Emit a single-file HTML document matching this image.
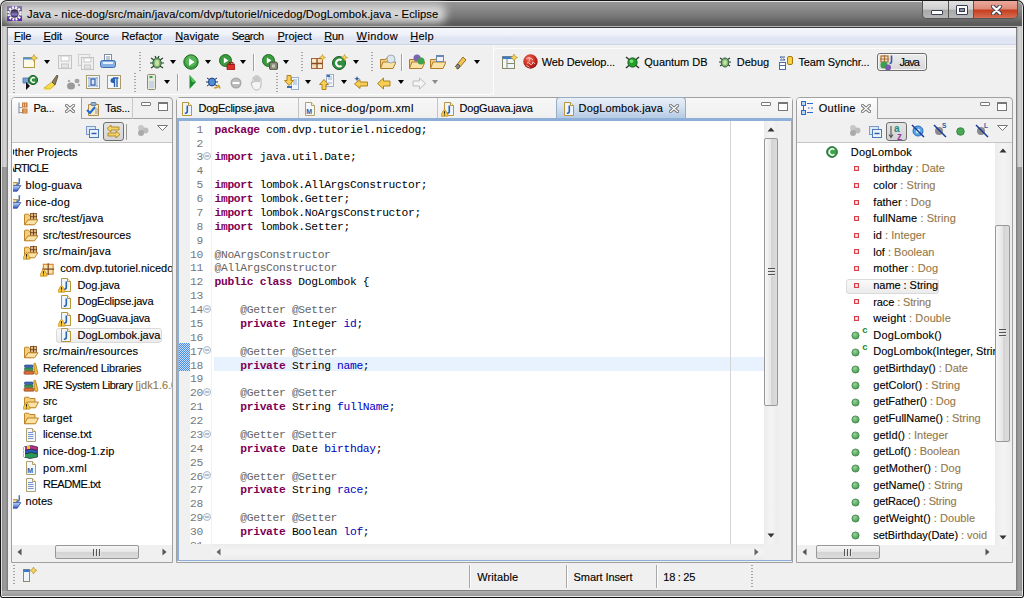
<!DOCTYPE html><html><head><meta charset="utf-8"><style>
*{box-sizing:border-box}
html,body{margin:0;padding:0}
body{width:1024px;height:598px;overflow:hidden;position:relative;background:#f0f0f0;font-family:"Liberation Sans",sans-serif;font-size:11px;color:#000}
.a{position:absolute}
.t{position:absolute;white-space:pre;line-height:13px;font-size:11px;-webkit-text-stroke:0.12px currentColor}
.code{position:absolute;font-family:"Liberation Mono",monospace;font-size:11.3px;letter-spacing:-0.331px;line-height:13.875px;height:13.875px;white-space:pre;color:#000}
.k{color:#7f0055;font-weight:bold}
.f{color:#0000c0}
.an{color:#646464}
.ln{position:absolute;font-family:"Liberation Mono",monospace;font-size:11.3px;letter-spacing:-0.331px;line-height:13.875px;white-space:pre;color:#787878;text-align:right}
.row{position:absolute;white-space:pre;font-size:11px;line-height:16.64px;height:16.64px}
.ty{color:#95784b}
.dd{position:absolute;width:0;height:0;border-left:3.5px solid transparent;border-right:3.5px solid transparent;border-top:4px solid #000}
.grip{position:absolute;width:2px;background:repeating-linear-gradient(#a4a4a4 0 1px,transparent 1px 3px)}
.sep{position:absolute;width:2px;background:#a0a0a0;border-right:1px solid #fff}
</style></head><body>
<div class="a" style="left:0px;top:0px;width:1024px;height:598px;background:#141414;border-radius:7px 7px 3px 3px"></div>
<div class="a" style="left:1px;top:1px;width:1022px;height:596px;background:#e4e4e4;border-radius:6px 6px 2px 2px"></div>
<div class="a" style="left:2px;top:2px;width:1020px;height:594px;background:linear-gradient(90deg,#8c8c8c,#a0a0a0 3px,#8a8a8a 5px,#8a8a8a calc(100% - 5px),#a0a0a0 calc(100% - 3px),#8c8c8c);border-radius:5px 5px 1px 1px"></div>
<div class="a" style="left:2px;top:2px;width:1020px;height:25px;background:linear-gradient(#959595,#888 30%,#747474 60%,#5c5c5c 85%,#575757);border-radius:5px 5px 0 0"></div>
<div class="a" style="left:2px;top:26px;width:1020px;height:1px;background:#b8b8b8"></div>
<div class="a" style="left:2px;top:27px;width:5px;height:140px;background:linear-gradient(90deg,#b8b8b8,#d4d4d4 40%,#cfcfcf 80%,#b0b0b0)"></div>
<div class="a" style="left:1017px;top:27px;width:5px;height:140px;background:linear-gradient(90deg,#b0b0b0,#d4d4d4 40%,#cfcfcf 80%,#b8b8b8)"></div>
<div class="a" style="left:2px;top:591px;width:1020px;height:5px;background:linear-gradient(#b0b0b0,#9a9a9a)"></div>
<div class="a" style="left:2px;top:596px;width:1020px;height:1px;background:#eeeeee"></div>
<div class="a" style="left:4px;top:4px;width:442px;height:19px;border-radius:8px;background:rgba(214,214,214,1);filter:blur(4px)"></div>
<svg class="a" style="left:7px;top:6px" width="15" height="15" viewBox="0 0 15 15">
<defs><linearGradient id="wig" x1="0" y1="0" x2="0" y2="1"><stop offset="0" stop-color="#8a78b0"/><stop offset=".5" stop-color="#6a50a0"/><stop offset="1" stop-color="#5a2aa8"/></linearGradient>
<linearGradient id="wic" x1="0" y1="0" x2="0" y2="1"><stop offset="0" stop-color="#2a2540"/><stop offset=".45" stop-color="#6a5a98"/><stop offset=".6" stop-color="#8a7ac0"/><stop offset="1" stop-color="#3a3068"/></linearGradient></defs>
<rect width="15" height="15" fill="url(#wig)"/>
<circle cx="7.5" cy="7.5" r="6.1" fill="none" stroke="#fafafa" stroke-width="2.4" stroke-dasharray="1.9 1.294"/>
<circle cx="7.5" cy="7.5" r="5" fill="#fafafa"/>
<circle cx="7.5" cy="7.5" r="3.9" fill="url(#wic)" stroke="#222" stroke-width=".6"/>
</svg>
<div class="t" style="left:27px;top:7.62px;font-size:11.2px;letter-spacing:0.107px;">Java - nice-dog/src/main/java/com/dvp/tutoriel/nicedog/DogLombok.java - Eclipse</div>
<div class="a" style="left:922px;top:1px;width:96px;height:18px;border:1px solid #555;border-top:none;border-radius:0 0 5px 5px;overflow:hidden;background:#888">
<div class="a" style="left:0;top:0;width:26px;height:18px;background:linear-gradient(#e2e2e2,#cfcfcf 45%,#a9a9a9 52%,#b9b9b9);border-right:1px solid #555"></div>
<div class="a" style="left:26px;top:0;width:25px;height:18px;background:linear-gradient(#e2e2e2,#cfcfcf 45%,#a9a9a9 52%,#b9b9b9);border-right:1px solid #555"></div>
<div class="a" style="left:51px;top:0;width:44px;height:18px;background:linear-gradient(#eba99b,#dd8c7a 42%,#c63f20 52%,#d9745a)"></div>
<div class="a" style="left:8px;top:9px;width:12px;height:5px;background:#fff;border:1px solid #3b3f52;border-radius:1px"></div>
<div class="a" style="left:33px;top:4px;width:12px;height:10px;background:#fff;border:1px solid #3b3f52;border-radius:1px"><div class="a" style="left:2px;top:2px;width:6px;height:4px;background:#8d91a0;border:1px solid #3b3f52"></div></div>
<svg class="a" style="left:68px;top:4px" width="11" height="10" viewBox="0 0 11 10"><path d="M2 1.5 L9 8.5 M9 1.5 L2 8.5" stroke="#3b3f52" stroke-width="4.2" stroke-linecap="round"/><path d="M2 1.5 L9 8.5 M9 1.5 L2 8.5" stroke="#fff" stroke-width="2.3" stroke-linecap="round"/></svg>
</div>
<div class="a" style="left:7px;top:27px;width:1010px;height:564px;background:#808080"></div>
<div class="a" style="left:7px;top:27px;width:1010px;height:1px;background:#383838"></div>
<div class="a" style="left:8px;top:28px;width:1008px;height:562px;background:#f0f0f0"></div>
<div class="a" style="left:8px;top:28px;width:1008px;height:17px;background:linear-gradient(#f6f8fc,#eef1f8 40%,#dee4f2 60%,#e1e6f3)"></div>
<div class="a" style="left:8px;top:44px;width:1008px;height:1px;background:#cdd2e4"></div>
<div class="a" style="left:8px;top:45px;width:1008px;height:1px;background:#f5f5f6"></div>
<div class="t" style="left:14.1px;top:30.19px;font-size:11px;letter-spacing:-0.183px;"><u>F</u>ile</div>
<div class="t" style="left:43.4px;top:30.19px;font-size:11px;letter-spacing:-0.056px;"><u>E</u>dit</div>
<div class="t" style="left:75px;top:30.19px;font-size:11px;letter-spacing:-0.155px;"><u>S</u>ource</div>
<div class="t" style="left:121.4px;top:30.19px;font-size:11px;letter-spacing:-0.071px;">Refac<u>t</u>or</div>
<div class="t" style="left:175.3px;top:30.19px;font-size:11px;letter-spacing:0.066px;"><u>N</u>avigate</div>
<div class="t" style="left:231.7px;top:30.19px;font-size:11px;letter-spacing:-0.475px;">Se<u>a</u>rch</div>
<div class="t" style="left:277.4px;top:30.19px;font-size:11px;letter-spacing:0.025px;"><u>P</u>roject</div>
<div class="t" style="left:324.3px;top:30.19px;font-size:11px;letter-spacing:-0.352px;"><u>R</u>un</div>
<div class="t" style="left:356.6px;top:30.19px;font-size:11px;letter-spacing:0.412px;"><u>W</u>indow</div>
<div class="t" style="left:410.3px;top:30.19px;font-size:11px;letter-spacing:0.220px;"><u>H</u>elp</div>
<div class="grip" style="left:13px;top:52px;height:20px"></div>
<svg class="a" style="left:22px;top:54px" width="16" height="16" viewBox="0 0 16 16"><rect x="1.5" y="3.5" width="11" height="10" fill="#fdfbe6" stroke="#b59a4b"/><rect x="1.5" y="3.5" width="11" height="2" fill="#4f8fd6"/><path d="M12 0.5 l1.2 2.3 2.3 1.2 -2.3 1.2 -1.2 2.3 -1.2 -2.3 -2.3 -1.2 2.3 -1.2z" fill="#f6d35b" stroke="#b08a20" stroke-width=".6"/></svg>
<div class="dd" style="left:44px;top:60px;border-top-color:#000"></div>
<svg class="a" style="left:57px;top:54px" width="16" height="16" viewBox="0 0 16 16"><rect x="1.5" y="1.5" width="13" height="13" fill="#f0f0f0" stroke="#c3c3c3"/><rect x="4" y="2" width="8" height="5" fill="#fff" stroke="#c8c8c8"/><rect x="4.5" y="10" width="7" height="4" fill="#e4e4e4" stroke="#c8c8c8"/></svg>
<svg class="a" style="left:78px;top:54px" width="16" height="16" viewBox="0 0 16 16"><rect x="0.5" y="0.5" width="11" height="11" fill="#f0f0f0" stroke="#cfcfcf"/><rect x="3.5" y="3.5" width="12" height="12" fill="#f0f0f0" stroke="#c3c3c3"/><rect x="6" y="4" width="7" height="4" fill="#fff" stroke="#c8c8c8"/><rect x="6.5" y="11" width="6" height="4" fill="#e4e4e4" stroke="#c8c8c8"/></svg>
<svg class="a" style="left:100px;top:54px" width="16" height="16" viewBox="0 0 16 16"><rect x="4.5" y="0.5" width="7" height="7" fill="#fff" stroke="#7f8da8"/><path d="M6 3h4M6 5h4" stroke="#7f8da8"/><rect x="0.5" y="6.5" width="15" height="7" rx="2" fill="#86aee0" stroke="#3d6eb5"/><rect x="3" y="8" width="10" height="2" fill="#e6f0fb"/></svg>
<div class="grip" style="left:139px;top:52px;height:20px"></div>
<svg class="a" style="left:149px;top:54px" width="16" height="16" viewBox="0 0 16 16"><g stroke="#1e3d2d" stroke-width="1.2"><path d="M2 4l3 2M14 4l-3 2M1 9h3M15 9h-3M2 14l3-2M14 14l-3-2M6 2l1 2M10 2l-1 2"/></g><ellipse cx="8" cy="9" rx="4.2" ry="5" fill="#7fb46e" stroke="#2b5a3a"/><ellipse cx="8" cy="9" rx="2" ry="3" fill="#c6e3a6"/></svg>
<div class="dd" style="left:170px;top:60px;border-top-color:#000"></div>
<svg class="a" style="left:183px;top:54px" width="16" height="16" viewBox="0 0 16 16"><circle cx="8" cy="8" r="7.2" fill="#3a9a3e" stroke="#1f6e24"/><circle cx="8" cy="7" r="5.5" fill="#58b55a"/><path d="M6 4.2 L11.5 8 L6 11.8z" fill="#fff"/></svg>
<div class="dd" style="left:205px;top:60px;border-top-color:#000"></div>
<svg class="a" style="left:219px;top:54px" width="16" height="16" viewBox="0 0 16 16"><circle cx="6.5" cy="6.5" r="6" fill="#3a9a3e" stroke="#1f6e24"/><path d="M4.8 3.5 L9.5 6.5 L4.8 9.5z" fill="#fff"/><rect x="8" y="10" width="8" height="6" rx="1" fill="#d8302c" stroke="#8f1510" stroke-width=".8"/><rect x="10" y="8.5" width="4" height="2" fill="none" stroke="#8f1510" stroke-width=".8"/></svg>
<div class="dd" style="left:240px;top:60px;border-top-color:#000"></div>
<div class="sep" style="left:253px;top:54px;height:17px"></div>
<svg class="a" style="left:262px;top:54px" width="16" height="16" viewBox="0 0 16 16"><circle cx="6.5" cy="6.5" r="6" fill="#3a9a3e" stroke="#1f6e24"/><path d="M4.8 3.5 L9.5 6.5 L4.8 9.5z" fill="#fff"/><rect x="7.5" y="8" width="8" height="8" rx="2" fill="#8a8a7a" stroke="#4d4d3d"/><rect x="10" y="10.5" width="3" height="3" fill="#c8c8b8"/></svg>
<div class="dd" style="left:283px;top:60px;border-top-color:#000"></div>
<div class="grip" style="left:301px;top:52px;height:20px"></div>
<svg class="a" style="left:310px;top:54px" width="16" height="16" viewBox="0 0 16 16"><rect x="1.5" y="4.5" width="11" height="10" fill="#f4dcb0" stroke="#a8643a"/><rect x="2.5" y="5.5" width="4" height="4" fill="#fbeed0"/><rect x="7.5" y="10" width="4" height="4" fill="#fbeed0"/><path d="M1.5 9.5h11M7 4.5v10" stroke="#8a4a22" stroke-width="1.3"/><path d="M12.5 0.5 l1 2 2 1 -2 1 -1 2 -1 -2 -2 -1 2 -1z" fill="#f6d35b" stroke="#b08a20" stroke-width=".6"/></svg>
<svg class="a" style="left:332px;top:54px" width="16" height="16" viewBox="0 0 16 16"><circle cx="7" cy="9" r="6.5" fill="#2f8f3e" stroke="#1b5e26"/><path d="M9.6 6.3 A3.4 3.4 0 1 0 9.6 11.7" fill="none" stroke="#fff" stroke-width="2"/><path d="M12.5 0.5 l1 2 2 1 -2 1 -1 2 -1 -2 -2 -1 2 -1z" fill="#f6d35b" stroke="#b08a20" stroke-width=".6"/></svg>
<div class="dd" style="left:353px;top:60px;border-top-color:#000"></div>
<div class="grip" style="left:371px;top:52px;height:20px"></div>
<svg class="a" style="left:380px;top:54px" width="16" height="16" viewBox="0 0 16 16"><path d="M0.5 5.5h5l1-1.5h6v9.5h-12z" fill="#f3cf86" stroke="#b07b2a"/><path d="M0.5 14.5 l2.5-6.5h13l-3 6.5z" fill="#fbe2a6" stroke="#b07b2a"/><circle cx="11" cy="5" r="4" fill="#dce6ef" stroke="#8a9aaa" stroke-width=".8"/></svg>
<div class="sep" style="left:401px;top:54px;height:17px"></div>
<svg class="a" style="left:409px;top:54px" width="16" height="16" viewBox="0 0 16 16"><path d="M0.5 5.5h5l1-1.5h6v9.5h-12z" fill="#f3cf86" stroke="#b07b2a"/><path d="M0.5 14.5 l2.5-6.5h13l-3 6.5z" fill="#fbe2a6" stroke="#b07b2a"/><circle cx="8" cy="4" r="3.5" fill="#7b62b5"/><circle cx="12" cy="7" r="3.5" fill="#3ea24a"/></svg>
<svg class="a" style="left:430px;top:54px" width="16" height="16" viewBox="0 0 16 16"><path d="M0.5 5.5h5l1-1.5h6v9.5h-12z" fill="#f3cf86" stroke="#b07b2a"/><path d="M0.5 14.5 l2.5-6.5h13l-3 6.5z" fill="#fbe2a6" stroke="#b07b2a"/><rect x="6.5" y="1.5" width="7" height="6" fill="#eef3fa" stroke="#6c87b0"/><rect x="6.5" y="1.5" width="7" height="1.5" fill="#6c87b0"/></svg>
<svg class="a" style="left:452px;top:54px" width="16" height="16" viewBox="0 0 16 16"><path d="M3 13 L11 3 L14 6 L6 15z" fill="#f2c25a" stroke="#9c6e1c"/><path d="M3 13 L6 10 L8 12 L6 15z" fill="#8a8a8a" stroke="#555"/><path d="M1 15.5 l3-2" stroke="#fff6b0" stroke-width="2"/></svg>
<div class="dd" style="left:474px;top:60px;border-top-color:#000"></div>
<div class="grip" style="left:13px;top:74px;height:19px"></div>
<svg class="a" style="left:22px;top:74px" width="16" height="16" viewBox="0 0 16 16"><path d="M1 4h9v5H1z" fill="#7aa0d8" stroke="#3d6eb5" stroke-width=".8"/><path d="M4 8v8l4-4z" fill="#111"/><circle cx="11" cy="6" r="4.6" fill="#2f8f3e" stroke="#1b5e26"/><path d="M12.8 4.3A2.3 2.3 0 1 0 12.8 7.7" fill="none" stroke="#fff" stroke-width="1.4"/></svg>
<svg class="a" style="left:43px;top:74px" width="16" height="16" viewBox="0 0 16 16"><path d="M1 14 L9 8 L12 11 L7 15z" fill="#f6dc4a" stroke="#c8a21c" stroke-width=".8"/><path d="M9 8 L14 1 L15 2 L12 11z" fill="#8a7a60" stroke="#5a4a30" stroke-width=".8"/><path d="M0 15.5h8" stroke="#f6e46a" stroke-width="1.5"/></svg>
<svg class="a" style="left:65px;top:75px" width="16" height="16" viewBox="0 0 16 16"><ellipse cx="6" cy="11" rx="4" ry="3.5" fill="#9a9a9a"/><ellipse cx="12" cy="6" rx="2.5" ry="2.2" fill="#a5a5a5"/><circle cx="4" cy="6" r="1.2" fill="#aaa"/><circle cx="14" cy="10" r="1.2" fill="#aaa"/></svg>
<svg class="a" style="left:86px;top:75px" width="16" height="16" viewBox="0 0 16 16"><rect x="0.5" y="0.5" width="13" height="13" fill="#f4f8fc" stroke="#a89a6a"/><path d="M2.5 3h9M2.5 11h9M3 2.5v9M11 2.5v9" stroke="#3a6ab8" stroke-dasharray="1 1"/><rect x="5" y="4" width="4" height="6" fill="#dde8f6" stroke="#2a5aa8" stroke-width="1.2"/></svg>
<svg class="a" style="left:107px;top:75px" width="16" height="16" viewBox="0 0 16 16"><rect x="0.5" y="0.5" width="13" height="13" fill="#f4f8fc" stroke="#a89a6a"/><path d="M7.5 3v9M10 3v9M6 3h5.5" stroke="#2a62b0" stroke-width="1.4" fill="none"/><path d="M7.5 3h-1.5a2.5 2.5 0 0 0 0 5h1.5z" fill="#2a62b0"/></svg>
<div class="grip" style="left:134px;top:73px;height:20px"></div>
<svg class="a" style="left:147px;top:74px" width="16" height="16" viewBox="0 0 16 16"><rect x="0.5" y="0.5" width="8" height="15" rx="1" fill="#e6eadc" stroke="#8b8a6a"/><rect x="2.5" y="2" width="3" height="2" fill="#3aa04a"/><rect x="2" y="7" width="5" height="7" fill="#c8d4e4"/></svg>
<div class="dd" style="left:164px;top:79.5px;border-top-color:#000"></div>
<div class="sep" style="left:177px;top:74px;height:17px"></div>
<svg class="a" style="left:188px;top:74px" width="16" height="16" viewBox="0 0 16 16"><path d="M1.5 1 L8 8 L1.5 15z" fill="#1e8a2e"/><path d="M1.5 1 L8 8 L4 8z" fill="#56c45a"/></svg>
<svg class="a" style="left:206px;top:75px" width="16" height="16" viewBox="0 0 16 16"><g stroke="#1e2d5d" stroke-width="1"><path d="M1 3l3 2M11 3l-3 2M0 7h3M12 7h-3M1 11l3-2M11 11l-3-2"/></g><ellipse cx="6" cy="7" rx="3.5" ry="4" fill="#4e90d8" stroke="#1e3d7d"/><path d="M8 13 q3 0 5-2 l-1.5-1 M13 11 l1 2.5" stroke="#c89a20" stroke-width="1.6" fill="none"/></svg>
<svg class="a" style="left:230px;top:77px" width="16" height="16" viewBox="0 0 16 16"><circle cx="6" cy="6" r="5.5" fill="#a8a8a8"/><circle cx="6" cy="6" r="4" fill="#bdbdbd"/><rect x="2.5" y="5" width="7" height="2" fill="#fff"/></svg>
<svg class="a" style="left:250px;top:75px" width="16" height="16" viewBox="0 0 16 16"><path d="M3 8V3a1 1 0 0 1 2 0v4V1.5a1 1 0 0 1 2 0V7V2a1 1 0 0 1 2 0v5V4a1 1 0 0 1 2 0v6c0 3-2 5-4 5H6c-2 0-3-2-4-4L1 8a1 1 0 0 1 2 0z" fill="#f4f4f4" stroke="#b8b8b8"/></svg>
<div class="grip" style="left:276px;top:73px;height:20px"></div>
<svg class="a" style="left:284px;top:75px" width="16" height="16" viewBox="0 0 16 16"><rect x="7.5" y="2.5" width="7" height="12" fill="#f2f6fc" stroke="#9ab0d0"/><path d="M9 5h4M9 7h4M9 9h4" stroke="#9ab0d0"/><rect x="3" y="11" width="5" height="2" fill="#3a6eb8"/><path d="M3 0.5h4v5h2.5l-4.5 5-4.5-5H3z" fill="#f6cd55" stroke="#b0821c"/></svg>
<div class="dd" style="left:305px;top:79.5px;border-top-color:#000"></div>
<svg class="a" style="left:319px;top:74px" width="16" height="16" viewBox="0 0 16 16"><rect x="7.5" y="0.5" width="7" height="12" fill="#f2f6fc" stroke="#9ab0d0"/><path d="M9 3h4M9 5h4M9 9h4" stroke="#9ab0d0"/><rect x="8" y="1" width="3" height="2" fill="#3a6eb8"/><path d="M3 15.5h4v-5h2.5l-4.5-5-4.5 5H3z" fill="#f6cd55" stroke="#b0821c"/></svg>
<div class="dd" style="left:341px;top:79.5px;border-top-color:#000"></div>
<svg class="a" style="left:354px;top:76px" width="16" height="16" viewBox="0 0 16 16"><path d="M0.5 8 L6 3.5v2.5h7.5v4H6v2.5z" fill="#f6cd55" stroke="#b0821c"/><path d="M3 0l.8 2 2 .8-2 .8-.8 2-.8-2-2-.8 2-.8z" fill="#2a5aa8"/></svg>
<svg class="a" style="left:377px;top:76px" width="16" height="16" viewBox="0 0 16 16"><path d="M0.5 7.5 L6.5 2v3h6.5v5H6.5v3z" fill="#f6cd55" stroke="#b0821c"/></svg>
<div class="dd" style="left:398px;top:79.5px;border-top-color:#000"></div>
<svg class="a" style="left:412px;top:76px" width="16" height="16" viewBox="0 0 16 16"><path d="M13.5 7.5 L7.5 2v3H1v5h6.5v3z" fill="#f4f4f4" stroke="#bcbcbc"/></svg>
<div class="dd" style="left:432px;top:79.5px;border-top-color:#8a8a8a"></div>
<div class="a" style="left:8px;top:46px;width:486px;height:49px;border-right:1px solid #fcfcfc;border-bottom:1px solid #fcfcfc;border-bottom-right-radius:4px"></div>
<div class="a" style="left:493px;top:48px;width:523px;height:47px;border-top:1px solid #fcfcfc;border-left:1px solid #fcfcfc;border-top-left-radius:4px"></div>
<svg class="a" style="left:502px;top:54px" width="16" height="16" viewBox="0 0 16 16"><rect x="0.5" y="2.5" width="12" height="12" fill="#eef6fc" stroke="#8a8a6a"/><rect x="0.5" y="2.5" width="12" height="2.5" fill="#3a7ac8"/><path d="M5 5v9.5M5 9.5h7.5" stroke="#8a8a6a"/><path d="M12 0 l1.2 2.3 2.3 1.2 -2.3 1.2 -1.2 2.3 -1.2 -2.3 -2.3 -1.2 2.3 -1.2z" fill="#f6d35b" stroke="#b08a20" stroke-width=".6"/></svg>
<svg class="a" style="left:523px;top:54px" width="16" height="16" viewBox="0 0 16 16"><defs><radialGradient id="wbg" cx=".4" cy=".35" r=".7"><stop offset="0" stop-color="#f07060"/><stop offset=".6" stop-color="#c82a20"/><stop offset="1" stop-color="#8a1010"/></radialGradient></defs><circle cx="7.5" cy="7.5" r="7.2" fill="url(#wbg)"/><path d="M3 5q2-2 4-1t3 2M4 9q2-1 3 1t3-1M6 3.5q1 2 0 4M9 8q2 0 3 2M3.5 11.5q2 .5 3 2" stroke="#fde0d8" stroke-width=".9" fill="none" opacity=".9"/></svg>
<div class="t" style="left:541.7px;top:55.99px;font-size:11px;letter-spacing:-0.117px;">Web Develop...</div>
<svg class="a" style="left:625px;top:55px" width="16" height="16" viewBox="0 0 16 16"><path d="M1 2l13 11M14 2L1 13" stroke="#3a3a3a" stroke-width="1.6"/><circle cx="7.5" cy="7.5" r="4.6" fill="#22a02a" stroke="#0e5a14"/><circle cx="6.5" cy="6.3" r="1.8" fill="#7ee07a"/></svg>
<div class="t" style="left:644.3px;top:55.99px;font-size:11px;letter-spacing:-0.044px;">Quantum DB</div>
<svg class="a" style="left:719px;top:55px" width="16" height="16" viewBox="0 0 16 16"><g stroke="#1e3d2d" stroke-width="1.1"><path d="M1 3l3 2M11 3l-3 2M0 7h3M12 7h-3M1 11l3-2M11 11l-3-2"/></g><ellipse cx="6" cy="7.5" rx="3.8" ry="4.5" fill="#7fb46e" stroke="#2b5a3a"/><ellipse cx="6" cy="7.5" rx="1.8" ry="2.6" fill="#c6e3a6"/></svg>
<div class="t" style="left:736.8px;top:55.99px;font-size:11px;letter-spacing:-0.005px;">Debug</div>
<svg class="a" style="left:779px;top:55px" width="16" height="16" viewBox="0 0 16 16"><rect x="0.5" y="7.5" width="6" height="7" fill="#fff" stroke="#4a6aa8"/><path d="M1 10.5h5" stroke="#4a6aa8"/><path d="M1 5h5l-1.5-1.5M6 2H1l1.5 1.5" stroke="#3a5a98" fill="none"/><rect x="8.5" y="1.5" width="5" height="8" rx="1.5" fill="#f8d048" stroke="#a87a10"/></svg>
<div class="t" style="left:798.5px;top:55.99px;font-size:11px;letter-spacing:-0.128px;">Team Synchr...</div>
<div class="a" style="left:877px;top:53px;width:50px;height:18px;border:1px solid #6e6e6e;border-radius:3px;background:linear-gradient(#ececec,#d8d8d8);box-shadow:inset 0 0 0 1px #f6f6f6"></div>
<svg class="a" style="left:880px;top:55px" width="16" height="16" viewBox="0 0 16 16"><rect x="1" y="1" width="7" height="6" fill="none" stroke="#b0702c" stroke-width="1.2"/><path d="M4.5 0v8M0 4h9" stroke="#b0702c" stroke-width="1.2"/><path d="M11.5 0.5v6q0 2-2 2" stroke="#2a5aa8" stroke-width="1.6" fill="none"/><circle cx="4" cy="10" r="3.6" fill="#3aa04a"/><circle cx="8" cy="12.5" r="3" fill="#7b5ab5"/></svg>
<div class="t" style="left:899.6px;top:55.99px;font-size:11px;letter-spacing:-1.017px;">Java</div>
<div class="a" style="left:11px;top:97px;width:162px;height:466px;border:1px solid #a0a0a0;border-radius:4px 4px 0 0;background:#f0f0f0"></div>
<div class="a" style="left:82px;top:118px;width:90px;height:1px;background:#a0a0a0"></div>
<div class="a" style="left:12px;top:98px;width:70px;height:21px;background:linear-gradient(#fefefe,#f4f4f4 60%,#f0f0f0);border-radius:3px 3px 0 0"></div>
<div class="a" style="left:81px;top:98px;width:1px;height:21px;background:#a0a0a0"></div>
<div class="a" style="left:132px;top:98px;width:1px;height:21px;background:#c8c8c8"></div>
<svg class="a" style="left:18px;top:102px" width="10" height="12" viewBox="0 0 10 12"><path d="M1 0.5v11M1 5.5h3M1 10.5h3" stroke="#8a9ab0" stroke-width="1.2"/><rect x="4" y="0.5" width="5.5" height="5" fill="#c87b3a"/><rect x="4" y="6.5" width="5.5" height="5" fill="#c87b3a"/><path d="M5.5 1.5v3M7.5 1.5v3M5.5 8h3M5.5 10h3" stroke="#f6d29a" stroke-width=".8"/></svg>
<div class="t" style="left:33.4px;top:102.29px;font-size:11px;letter-spacing:-0.381px;">Pa...</div>
<svg class="a" style="left:65px;top:104px" width="10" height="9" viewBox="0 0 10 9"><path d="M1.5 1.5L8.5 7.5M8.5 1.5L1.5 7.5" stroke="#6a6a6a" stroke-width="3" stroke-linecap="square"/><path d="M1.5 1.5L8.5 7.5M8.5 1.5L1.5 7.5" stroke="#fff" stroke-width="1.3" stroke-linecap="square"/></svg>
<svg class="a" style="left:86px;top:101px" width="15" height="15" viewBox="0 0 15 15"><path d="M2.5 3.5h10v11h-10z" fill="#f5e9c6" stroke="#b08a48"/><rect x="5" y="1.5" width="5" height="3" rx="1" fill="#9ab0d0" stroke="#4a6a98" stroke-width=".8"/><path d="M1 9l3 3 5-6" stroke="#1e6ad8" stroke-width="2" fill="none"/><path d="M9 8h3M9 10h3M9 12h3" stroke="#7a8aa8" stroke-width=".8"/></svg>
<div class="t" style="left:105px;top:102.29px;font-size:11px;letter-spacing:-0.239px;">Tas...</div>
<div class="a" style="left:141px;top:102px;width:10px;height:4px;border:1px solid #777;background:#fff;border-radius:1px"></div>
<div class="a" style="left:158px;top:102px;width:10px;height:9px;border:1px solid #777;border-top-width:2px;background:#fff"></div>
<div class="a" style="left:12px;top:142px;width:160px;height:1px;background:#c4c4c4"></div>
<svg class="a" style="left:86px;top:126px" width="13" height="12" viewBox="0 0 13 12"><rect x="0.5" y="0.5" width="9" height="8" fill="#dde8f6" stroke="#7a9ac8"/><rect x="3.5" y="3.5" width="9" height="8" fill="#eaf2fb" stroke="#4a7ab8"/><path d="M5.5 7.5h5" stroke="#2a5aa8" stroke-width="1.4"/></svg>
<div class="a" style="left:103px;top:122px;width:21px;height:19px;border:1px solid #6f6f6f;border-radius:3px;background:linear-gradient(#e4e4e4,#d4d4d4)"></div>
<svg class="a" style="left:106px;top:124px" width="15" height="14" viewBox="0 0 15 14"><path d="M1 4.5l4-3.5v2h8v3H5v2z" fill="#f3d36a" stroke="#b08420" stroke-width=".9"/><path d="M14 10.5l-4-3.5v2H2v3h8v2z" fill="#f3d36a" stroke="#b08420" stroke-width=".9"/></svg>
<div class="a" style="left:126px;top:124px;width:1px;height:16px;background:#9a9a9a"></div>
<svg class="a" style="left:136px;top:124px" width="13" height="13" viewBox="0 0 13 13"><circle cx="5" cy="4" r="3" fill="#c8c8c8"/><circle cx="9.5" cy="6.5" r="3" fill="#bdbdbd"/><circle cx="5" cy="9" r="3" fill="#aaaaaa"/></svg>
<svg class="a" style="left:157px;top:125px" width="11" height="6" viewBox="0 0 11 6"><path d="M0.5 0.5h10l-5 5z" fill="#fff" stroke="#777"/></svg>
<div class="a" style="left:12px;top:143px;width:160px;height:402px;background:#fff"></div>
<div class="a" style="left:12px;top:545px;width:160px;height:16px;background:#f0f0f0"></div>
<svg class="a" style="left:17px;top:548px" width="5" height="8" viewBox="0 0 5 8"><path d="M4.5 0.5v7l-4-3.5z" fill="#555"/></svg>
<svg class="a" style="left:162px;top:548px" width="5" height="8" viewBox="0 0 5 8"><path d="M0.5 0.5v7l4-3.5z" fill="#555"/></svg>
<div class="a" style="left:55px;top:545px;width:84px;height:14px;border:1px solid #979797;border-radius:2px;background:linear-gradient(#f6f6f6,#e6e6e6 50%,#d3d3d3 51%,#dcdcdc)"></div>
<div class="a" style="left:93px;top:549px;width:8px;height:7px;background:repeating-linear-gradient(90deg,#555 0 1px,#e8e8e8 1px 2px,transparent 2px 3px)"></div>
<div class="a" style="left:13px;top:143px;width:159px;height:402px;overflow:hidden">
<div class="a" style="left:43px;top:184.50px;width:106px;height:15px;border:1px solid #dadada;border-radius:3px;background:linear-gradient(#fafafa,#ebebeb)"></div>
<div class="t" style="left:-7px;top:2.59px;font-size:11px;letter-spacing:0.091px;">Other Projects</div>
<div class="t" style="left:-5.5px;top:19.23px;font-size:11px;letter-spacing:-0.811px;">ARTICLE</div>
<svg class="a" style="left:-7.399999999999999px;top:34.379999999999995px" width="16" height="16" viewBox="0 0 16 16"><defs><linearGradient id="pjg" x1="0" y1="0" x2="0" y2="1"><stop offset="0" stop-color="#c4e2fc"/><stop offset="1" stop-color="#3252c0"/></linearGradient></defs><path d="M2 4.5h4l1 1h5v4H2z" fill="#f3d683" stroke="#b08a30" stroke-width=".8"/><path d="M13.3 1.3v4q0 2-2 2h-1" stroke="#4a72b8" stroke-width="1.5" fill="none"/><path d="M4 8.6h10.8l-3.6 5.6H1.6z" fill="url(#pjg)" stroke="#2a48a8" stroke-width=".8"/></svg>
<div class="t" style="left:12.600000000000001px;top:35.87px;font-size:11px;letter-spacing:0.218px;">blog-guava</div>
<svg class="a" style="left:-7.399999999999999px;top:51.01999999999998px" width="16" height="16" viewBox="0 0 16 16"><defs><linearGradient id="pjg" x1="0" y1="0" x2="0" y2="1"><stop offset="0" stop-color="#c4e2fc"/><stop offset="1" stop-color="#3252c0"/></linearGradient></defs><path d="M2 4.5h4l1 1h5v4H2z" fill="#f3d683" stroke="#b08a30" stroke-width=".8"/><path d="M13.3 1.3v4q0 2-2 2h-1" stroke="#4a72b8" stroke-width="1.5" fill="none"/><path d="M4 8.6h10.8l-3.6 5.6H1.6z" fill="url(#pjg)" stroke="#2a48a8" stroke-width=".8"/></svg>
<div class="t" style="left:12.600000000000001px;top:52.51px;font-size:11px;letter-spacing:0.300px;">nice-dog</div>
<svg class="a" style="left:9.900000000000006px;top:67.66px" width="16" height="16" viewBox="0 0 16 16"><path d="M1.5 13.5V4q0-.8.8-.8h3.2l1 1.3h1.5v9z" fill="#f3cf7a" stroke="#b87818" stroke-width=".9"/><rect x="7.5" y="2.5" width="6" height="6.5" fill="#e0b888" stroke="#8a5a2a" stroke-width=".9"/><path d="M10.5 1.8v7.5M7 5.7h7" stroke="#6a3a1a" stroke-width=".9"/><path d="M1.5 13.8l3.5-5h10l-3.5 5z" fill="#fbe3a5" stroke="#b87818" stroke-width=".9"/></svg>
<div class="t" style="left:29.900000000000006px;top:69.15px;font-size:11px;letter-spacing:0.151px;">src/test/java</div>
<svg class="a" style="left:9.900000000000006px;top:84.30000000000001px" width="16" height="16" viewBox="0 0 16 16"><path d="M1.5 13.5V4q0-.8.8-.8h3.2l1 1.3h1.5v9z" fill="#f3cf7a" stroke="#b87818" stroke-width=".9"/><rect x="7.5" y="2.5" width="6" height="6.5" fill="#e0b888" stroke="#8a5a2a" stroke-width=".9"/><path d="M10.5 1.8v7.5M7 5.7h7" stroke="#6a3a1a" stroke-width=".9"/><path d="M1.5 13.8l3.5-5h10l-3.5 5z" fill="#fbe3a5" stroke="#b87818" stroke-width=".9"/></svg>
<div class="t" style="left:29.900000000000006px;top:85.79px;font-size:11px;letter-spacing:0.070px;">src/test/resources</div>
<svg class="a" style="left:9.900000000000006px;top:100.94px" width="16" height="16" viewBox="0 0 16 16"><path d="M1.5 13.5V4q0-.8.8-.8h3.2l1 1.3h1.5v9z" fill="#f3cf7a" stroke="#b87818" stroke-width=".9"/><rect x="7.5" y="2.5" width="6" height="6.5" fill="#e0b888" stroke="#8a5a2a" stroke-width=".9"/><path d="M10.5 1.8v7.5M7 5.7h7" stroke="#6a3a1a" stroke-width=".9"/><path d="M1.5 13.8l3.5-5h10l-3.5 5z" fill="#fbe3a5" stroke="#b87818" stroke-width=".9"/><path d="M3.5 8.3q.5 0 .9.7l2.7 5.2q.4 1-.6 1H.5q-1 0-.6-1L2.6 9q.4-.7.9-.7z" fill="#f6c842" stroke="#c08a18" stroke-width=".7"/><path d="M3.5 10.2v2.5M3.5 13.6v.9" stroke="#222" stroke-width="1"/></svg>
<div class="t" style="left:29.900000000000006px;top:102.43px;font-size:11px;letter-spacing:0.259px;">src/main/java</div>
<svg class="a" style="left:27.200000000000003px;top:117.57999999999998px" width="16" height="16" viewBox="0 0 16 16"><rect x="3.3" y="3.3" width="9.8" height="9.8" fill="#f8e4a8" stroke="#d8802a" stroke-width="1.1"/><path d="M8.2 2.3v11.8M2.3 8.2h11.8" stroke="#7a4a2a" stroke-width="1.2"/><path d="M3.5 8.3q.5 0 .9.7l2.7 5.2q.4 1-.6 1H.5q-1 0-.6-1L2.6 9q.4-.7.9-.7z" fill="#f6c842" stroke="#c08a18" stroke-width=".7"/><path d="M3.5 10.2v2.5M3.5 13.6v.9" stroke="#222" stroke-width="1"/></svg>
<div class="t" style="left:47.2px;top:119.07px;font-size:11px;">com.dvp.tutoriel.nicedog</div>
<svg class="a" style="left:44.5px;top:134.21999999999997px" width="16" height="16" viewBox="0 0 16 16"><path d="M3.5 1.5h6l3 3v10h-9z" fill="#eef5fc" stroke="#b8963a"/><path d="M9.5 1.5v3h3" fill="#faf2dc" stroke="#b8963a"/><path d="M8.3 4.5v5.8q0 1.9-1.9 1.9h-.6" stroke="#2a62b0" stroke-width="1.6" fill="none"/><path d="M3.5 8.3q.5 0 .9.7l2.7 5.2q.4 1-.6 1H.5q-1 0-.6-1L2.6 9q.4-.7.9-.7z" fill="#f6c842" stroke="#c08a18" stroke-width=".7"/><path d="M3.5 10.2v2.5M3.5 13.6v.9" stroke="#222" stroke-width="1"/></svg>
<div class="t" style="left:64.5px;top:135.71px;font-size:11px;letter-spacing:-0.132px;">Dog.java</div>
<svg class="a" style="left:44.5px;top:150.85999999999996px" width="16" height="16" viewBox="0 0 16 16"><path d="M3.5 1.5h6l3 3v10h-9z" fill="#eef5fc" stroke="#b8963a"/><path d="M9.5 1.5v3h3" fill="#faf2dc" stroke="#b8963a"/><path d="M8.3 4.5v5.8q0 1.9-1.9 1.9h-.6" stroke="#2a62b0" stroke-width="1.6" fill="none"/></svg>
<div class="t" style="left:64.5px;top:152.35px;font-size:11px;letter-spacing:-0.205px;">DogEclipse.java</div>
<svg class="a" style="left:44.5px;top:167.5px" width="16" height="16" viewBox="0 0 16 16"><path d="M3.5 1.5h6l3 3v10h-9z" fill="#eef5fc" stroke="#b8963a"/><path d="M9.5 1.5v3h3" fill="#faf2dc" stroke="#b8963a"/><path d="M8.3 4.5v5.8q0 1.9-1.9 1.9h-.6" stroke="#2a62b0" stroke-width="1.6" fill="none"/><path d="M3.5 8.3q.5 0 .9.7l2.7 5.2q.4 1-.6 1H.5q-1 0-.6-1L2.6 9q.4-.7.9-.7z" fill="#f6c842" stroke="#c08a18" stroke-width=".7"/><path d="M3.5 10.2v2.5M3.5 13.6v.9" stroke="#222" stroke-width="1"/></svg>
<div class="t" style="left:64.5px;top:168.99px;font-size:11px;letter-spacing:-0.269px;">DogGuava.java</div>
<svg class="a" style="left:44.5px;top:184.14000000000004px" width="16" height="16" viewBox="0 0 16 16"><path d="M3.5 1.5h6l3 3v10h-9z" fill="#eef5fc" stroke="#b8963a"/><path d="M9.5 1.5v3h3" fill="#faf2dc" stroke="#b8963a"/><path d="M8.3 4.5v5.8q0 1.9-1.9 1.9h-.6" stroke="#2a62b0" stroke-width="1.6" fill="none"/></svg>
<div class="t" style="left:64.5px;top:185.63px;font-size:11px;letter-spacing:0.026px;">DogLombok.java</div>
<svg class="a" style="left:9.900000000000006px;top:200.78000000000003px" width="16" height="16" viewBox="0 0 16 16"><path d="M1.5 13.5V4q0-.8.8-.8h3.2l1 1.3h1.5v9z" fill="#f3cf7a" stroke="#b87818" stroke-width=".9"/><rect x="7.5" y="2.5" width="6" height="6.5" fill="#e0b888" stroke="#8a5a2a" stroke-width=".9"/><path d="M10.5 1.8v7.5M7 5.7h7" stroke="#6a3a1a" stroke-width=".9"/><path d="M1.5 13.8l3.5-5h10l-3.5 5z" fill="#fbe3a5" stroke="#b87818" stroke-width=".9"/></svg>
<div class="t" style="left:29.900000000000006px;top:202.27px;font-size:11px;letter-spacing:0.122px;">src/main/resources</div>
<svg class="a" style="left:9.900000000000006px;top:217.42000000000002px" width="16" height="16" viewBox="0 0 16 16"><rect x="1.5" y="5" width="8.5" height="2.6" rx=".8" fill="#3a6ab8" stroke="#1a3a78" stroke-width=".6"/><rect x="1.5" y="8" width="8.5" height="2.6" rx=".8" fill="#3a9a5a" stroke="#1a5a2a" stroke-width=".6"/><rect x="1" y="11" width="10" height="3.2" rx=".8" fill="#d8703a" stroke="#8a3a10" stroke-width=".6"/><path d="M11.5 3q1.3 0 1.3 1.8l2 7.8q.4 2-1.4 2t-1.8-2l-.8-7q0-2.6.7-2.6z" fill="#f2c040" stroke="#a07010" stroke-width=".7"/></svg>
<div class="t" style="left:29.900000000000006px;top:218.91px;font-size:11px;letter-spacing:-0.186px;">Referenced Libraries</div>
<svg class="a" style="left:9.900000000000006px;top:234.06px" width="16" height="16" viewBox="0 0 16 16"><rect x="1.5" y="5" width="8.5" height="2.6" rx=".8" fill="#3a6ab8" stroke="#1a3a78" stroke-width=".6"/><rect x="1.5" y="8" width="8.5" height="2.6" rx=".8" fill="#3a9a5a" stroke="#1a5a2a" stroke-width=".6"/><rect x="1" y="11" width="10" height="3.2" rx=".8" fill="#d8703a" stroke="#8a3a10" stroke-width=".6"/><path d="M11.5 3q1.3 0 1.3 1.8l2 7.8q.4 2-1.4 2t-1.8-2l-.8-7q0-2.6.7-2.6z" fill="#f2c040" stroke="#a07010" stroke-width=".7"/></svg>
<div class="t" style="left:29.900000000000006px;top:235.55px;font-size:11px;letter-spacing:-0.412px;">JRE System Library</div>
<div class="t" style="left:122.5px;top:235.55px;font-size:11px;letter-spacing:0.047px;color:#95784b">[jdk1.6.</div>
<div class="t" style="left:158px;top:235.55px;font-size:11px;color:#95784b">0_45]</div>
<svg class="a" style="left:9.900000000000006px;top:250.7px" width="16" height="16" viewBox="0 0 16 16"><path d="M1.5 13.5V4q0-.8.8-.8h3.5l1 1.3h5.2v9z" fill="#f3cf7a" stroke="#b87818" stroke-width=".9"/><path d="M1.5 13.8l3-5.8h11l-3 5.8z" fill="#fbe3a5" stroke="#b87818" stroke-width=".9"/><path d="M3.5 8.3q.5 0 .9.7l2.7 5.2q.4 1-.6 1H.5q-1 0-.6-1L2.6 9q.4-.7.9-.7z" fill="#f6c842" stroke="#c08a18" stroke-width=".7"/><path d="M3.5 10.2v2.5M3.5 13.6v.9" stroke="#222" stroke-width="1"/></svg>
<div class="t" style="left:29.900000000000006px;top:252.19px;font-size:11px;letter-spacing:-0.186px;">src</div>
<svg class="a" style="left:9.900000000000006px;top:267.34px" width="16" height="16" viewBox="0 0 16 16"><path d="M1.5 13.5V4q0-.8.8-.8h3.5l1 1.3h5.2v9z" fill="#f3cf7a" stroke="#b87818" stroke-width=".9"/><path d="M1.5 13.8l3-5.8h11l-3 5.8z" fill="#fbe3a5" stroke="#b87818" stroke-width=".9"/></svg>
<div class="t" style="left:29.900000000000006px;top:268.83px;font-size:11px;letter-spacing:0.232px;">target</div>
<svg class="a" style="left:9.900000000000006px;top:283.97999999999996px" width="16" height="16" viewBox="0 0 16 16"><path d="M3.5 1.5h6l3 3v10h-9z" fill="#f4f8fc" stroke="#b0a070"/><path d="M9.5 1.5v3h3" fill="#faf2dc" stroke="#b0a070"/><path d="M5 5.5h5M5 7.5h5.5M5 9.5h5.5M5 11.5h5.5" stroke="#6a8ac8" stroke-width=".9"/></svg>
<div class="t" style="left:29.900000000000006px;top:285.47px;font-size:11px;letter-spacing:-0.012px;">license.txt</div>
<svg class="a" style="left:9.900000000000006px;top:300.61999999999995px" width="16" height="16" viewBox="0 0 16 16"><path d="M1 3l7.5-1.5 6 1.5v3l-7.5 1.5L1 6z" fill="#c02a8a" stroke="#222" stroke-width=".7"/><path d="M1 6.5l7.5-1.5 6 1.5v3l-7.5 1.5L1 9.5z" fill="#2a5ab8" stroke="#222" stroke-width=".7"/><path d="M1 10l7.5-1.5 6 1.5v3l-7.5 1.5L1 13z" fill="#2a9a5a" stroke="#222" stroke-width=".7"/><path d="M1.5 3v10" stroke="#fff" stroke-width="1"/><rect x="4" y="2" width="3" height="3" fill="#d8d020"/></svg>
<div class="t" style="left:29.900000000000006px;top:302.11px;font-size:11px;letter-spacing:0.185px;">nice-dog-1.zip</div>
<svg class="a" style="left:9.900000000000006px;top:317.26000000000005px" width="16" height="16" viewBox="0 0 16 16"><path d="M3.5 1.5h6l3 3v10h-9z" fill="#f4f8fc" stroke="#b0a070"/><path d="M9.5 1.5v3h3" fill="#faf2dc" stroke="#b0a070"/><text x="4.3" y="12.5" font-family="Liberation Sans" font-weight="bold" font-size="7" fill="#2a5aa8">M</text></svg>
<div class="t" style="left:29.900000000000006px;top:318.75px;font-size:11px;letter-spacing:0.373px;">pom.xml</div>
<svg class="a" style="left:9.900000000000006px;top:333.90000000000003px" width="16" height="16" viewBox="0 0 16 16"><path d="M3.5 1.5h6l3 3v10h-9z" fill="#f4f8fc" stroke="#b0a070"/><path d="M9.5 1.5v3h3" fill="#faf2dc" stroke="#b0a070"/><path d="M5 5.5h5M5 7.5h5.5M5 9.5h5.5M5 11.5h5.5" stroke="#6a8ac8" stroke-width=".9"/></svg>
<div class="t" style="left:29.900000000000006px;top:335.39px;font-size:11px;letter-spacing:-0.415px;">README.txt</div>
<svg class="a" style="left:-7.399999999999999px;top:350.54px" width="16" height="16" viewBox="0 0 16 16"><defs><linearGradient id="pjg" x1="0" y1="0" x2="0" y2="1"><stop offset="0" stop-color="#c4e2fc"/><stop offset="1" stop-color="#3252c0"/></linearGradient></defs><path d="M2 4.5h4l1 1h5v4H2z" fill="#f3d683" stroke="#b08a30" stroke-width=".8"/><path d="M13.3 1.3v4q0 2-2 2h-1" stroke="#4a72b8" stroke-width="1.5" fill="none"/><path d="M4 8.6h10.8l-3.6 5.6H1.6z" fill="url(#pjg)" stroke="#2a48a8" stroke-width=".8"/></svg>
<div class="t" style="left:12.600000000000001px;top:352.03px;font-size:11px;letter-spacing:0.020px;">notes</div>
</div>
<div class="a" style="left:176px;top:97px;width:617px;height:466px;border:1px solid #a0a0a0;border-radius:4px 4px 0 0;background:#f0f0f0"></div>
<div class="a" style="left:177px;top:98px;width:615px;height:20px;background:linear-gradient(#f7f7f7,#f0f0f0)"></div>
<div class="a" style="left:298px;top:98px;width:1px;height:20px;background:#c4c4c4"></div>
<div class="a" style="left:437px;top:98px;width:1px;height:20px;background:#c4c4c4"></div>
<div class="a" style="left:556px;top:97px;width:130px;height:23px;border:1px solid #98acc4;border-bottom:none;border-radius:4px 4px 0 0;background:linear-gradient(#e9f0f9,#d3e0f0 45%,#bccfe7 80%,#b1c7e2)"></div>
<div class="a" style="left:177px;top:118px;width:615px;height:443px;border:2px solid #8eb0d8;border-top-width:3px;background:#fff"></div>
<svg class="a" style="left:179.2px;top:100.5px" width="16" height="16" viewBox="0 0 16 16"><path d="M3.5 1.5h6l3 3v10h-9z" fill="#eef5fc" stroke="#b8963a"/><path d="M9.5 1.5v3h3" fill="#faf2dc" stroke="#b8963a"/><path d="M8.3 4.5v5.8q0 1.9-1.9 1.9h-.6" stroke="#2a62b0" stroke-width="1.6" fill="none"/></svg>
<div class="t" style="left:198.4px;top:102.29px;font-size:11px;letter-spacing:-0.205px;">DogEclipse.java</div>
<svg class="a" style="left:301.6px;top:100.5px" width="16" height="16" viewBox="0 0 16 16"><path d="M3.5 1.5h6l3 3v10h-9z" fill="#f4f8fc" stroke="#b0a070"/><path d="M9.5 1.5v3h3" fill="#faf2dc" stroke="#b0a070"/><text x="4.3" y="12.5" font-family="Liberation Sans" font-weight="bold" font-size="7" fill="#2a5aa8">M</text></svg>
<div class="t" style="left:320.3px;top:102.29px;font-size:11px;letter-spacing:0.418px;">nice-dog/pom.xml</div>
<svg class="a" style="left:441px;top:100.5px" width="16" height="16" viewBox="0 0 16 16"><path d="M3.5 1.5h6l3 3v10h-9z" fill="#eef5fc" stroke="#b8963a"/><path d="M9.5 1.5v3h3" fill="#faf2dc" stroke="#b8963a"/><path d="M8.3 4.5v5.8q0 1.9-1.9 1.9h-.6" stroke="#2a62b0" stroke-width="1.6" fill="none"/><path d="M3.5 8.3q.5 0 .9.7l2.7 5.2q.4 1-.6 1H.5q-1 0-.6-1L2.6 9q.4-.7.9-.7z" fill="#f6c842" stroke="#c08a18" stroke-width=".7"/><path d="M3.5 10.2v2.5M3.5 13.6v.9" stroke="#222" stroke-width="1"/></svg>
<div class="t" style="left:459.6px;top:102.29px;font-size:11px;letter-spacing:-0.219px;">DogGuava.java</div>
<svg class="a" style="left:560.6px;top:100.5px" width="16" height="16" viewBox="0 0 16 16"><path d="M3.5 1.5h6l3 3v10h-9z" fill="#eef5fc" stroke="#b8963a"/><path d="M9.5 1.5v3h3" fill="#faf2dc" stroke="#b8963a"/><path d="M8.3 4.5v5.8q0 1.9-1.9 1.9h-.6" stroke="#2a62b0" stroke-width="1.6" fill="none"/></svg>
<div class="t" style="left:578.6px;top:102.29px;font-size:11px;letter-spacing:0.126px;">DogLombok.java</div>
<svg class="a" style="left:669px;top:104px" width="10" height="9" viewBox="0 0 10 9"><path d="M1.5 1.5L8.5 7.5M8.5 1.5L1.5 7.5" stroke="#6a6a6a" stroke-width="3" stroke-linecap="square"/><path d="M1.5 1.5L8.5 7.5M8.5 1.5L1.5 7.5" stroke="#fff" stroke-width="1.3" stroke-linecap="square"/></svg>
<div class="a" style="left:761px;top:102px;width:10px;height:4px;border:1px solid #777;background:#fff;border-radius:1px"></div>
<div class="a" style="left:778px;top:102px;width:10px;height:9px;border:1px solid #777;border-top-width:2px;background:#fff"></div>
<div class="a" style="left:179px;top:121px;width:11px;height:423px;background:#f0f0f0"></div>
<div class="a" style="left:179px;top:343px;width:11px;height:28px;background:repeating-conic-gradient(#4a8ee8 0 25%,#c4dcfa 0 50%) 0 0/2px 2px"></div>
<div class="a" style="left:211px;top:121px;width:1px;height:423px;background:#f2f2f2"></div>
<div class="a" style="left:214px;top:357.275px;width:550px;height:13.875px;background:#e8f2fe"></div>
<div class="a" style="left:730px;top:121px;width:1px;height:423px;background:#d4d4d4"></div>
<div class="a" style="left:764px;top:121px;width:14px;height:423px;background:linear-gradient(90deg,#ececec,#f4f4f4 50%,#ececec)"></div>
<div class="a" style="left:778px;top:121px;width:13px;height:423px;background:#f0f0f0"></div>
<svg class="a" style="left:767px;top:127px" width="8" height="5" viewBox="0 0 8 5"><path d="M0.5 4.5l3.5-4 3.5 4z" fill="#333"/></svg>
<div class="a" style="left:764px;top:138px;width:14px;height:268px;border:1px solid #979797;border-radius:2px;background:linear-gradient(90deg,#f6f6f6,#e6e6e6 50%,#d3d3d3 51%,#dcdcdc)"></div>
<div class="a" style="left:768px;top:268px;width:7px;height:8px;background:repeating-linear-gradient(#555 0 1px,#e8e8e8 1px 2px,transparent 2px 3px)"></div>
<svg class="a" style="left:767px;top:533px" width="8" height="5" viewBox="0 0 8 5"><path d="M0.5 0.5l3.5 4 3.5-4z" fill="#333"/></svg>
<div class="a" style="left:179px;top:544px;width:612px;height:16px;background:#f0f0f0"></div>
<div class="a" style="left:212px;top:544px;width:552px;height:16px;background:linear-gradient(#ececec,#f4f4f4 50%,#ececec)"></div>
<svg class="a" style="left:216px;top:548px" width="5" height="8" viewBox="0 0 5 8"><path d="M4.5 0.5v7l-4-3.5z" fill="#666"/></svg>
<svg class="a" style="left:754px;top:548px" width="5" height="8" viewBox="0 0 5 8"><path d="M0.5 0.5v7l4-3.5z" fill="#666"/></svg>
<div class="a" style="left:179px;top:121px;width:585px;height:423px;overflow:hidden">
<div class="ln" style="left:0px;top:2.70px;width:24px">1</div>
<div class="code" style="left:35.5px;top:2.70px"><span class="k">package</span> com.dvp.tutoriel.nicedog;</div>
<div class="ln" style="left:0px;top:16.58px;width:24px">2</div>
<div class="code" style="left:35.5px;top:16.58px"></div>
<div class="ln" style="left:0px;top:30.45px;width:24px">3</div>
<svg class="a" style="left:23.5px;top:31.150000000000006px" width="8" height="8" viewBox="0 0 8 8"><circle cx="4" cy="4" r="3.5" fill="#f4f7fb" stroke="#aab8c8"/><path d="M2 4h4" stroke="#7a8aa0"/></svg>
<div class="code" style="left:35.5px;top:30.45px"><span class="k">import</span> java.util.Date;</div>
<div class="ln" style="left:0px;top:44.33px;width:24px">4</div>
<div class="code" style="left:35.5px;top:44.33px"></div>
<div class="ln" style="left:0px;top:58.20px;width:24px">5</div>
<div class="code" style="left:35.5px;top:58.20px"><span class="k">import</span> lombok.AllArgsConstructor;</div>
<div class="ln" style="left:0px;top:72.08px;width:24px">6</div>
<div class="code" style="left:35.5px;top:72.08px"><span class="k">import</span> lombok.Getter;</div>
<div class="ln" style="left:0px;top:85.95px;width:24px">7</div>
<div class="code" style="left:35.5px;top:85.95px"><span class="k">import</span> lombok.NoArgsConstructor;</div>
<div class="ln" style="left:0px;top:99.83px;width:24px">8</div>
<div class="code" style="left:35.5px;top:99.83px"><span class="k">import</span> lombok.Setter;</div>
<div class="ln" style="left:0px;top:113.70px;width:24px">9</div>
<div class="code" style="left:35.5px;top:113.70px"></div>
<div class="ln" style="left:0px;top:127.58px;width:24px">10</div>
<div class="code" style="left:35.5px;top:127.58px"><span class="an">@NoArgsConstructor</span></div>
<div class="ln" style="left:0px;top:141.45px;width:24px">11</div>
<div class="code" style="left:35.5px;top:141.45px"><span class="an">@AllArgsConstructor</span></div>
<div class="ln" style="left:0px;top:155.32px;width:24px">12</div>
<div class="code" style="left:35.5px;top:155.32px"><span class="k">public</span> <span class="k">class</span> DogLombok {</div>
<div class="ln" style="left:0px;top:169.20px;width:24px">13</div>
<div class="code" style="left:35.5px;top:169.20px"></div>
<div class="ln" style="left:0px;top:183.07px;width:24px">14</div>
<svg class="a" style="left:23.5px;top:183.77499999999998px" width="8" height="8" viewBox="0 0 8 8"><circle cx="4" cy="4" r="3.5" fill="#f4f7fb" stroke="#aab8c8"/><path d="M2 4h4" stroke="#7a8aa0"/></svg>
<div class="code" style="left:35.5px;top:183.07px">    <span class="an">@Getter</span> <span class="an">@Setter</span></div>
<div class="ln" style="left:0px;top:196.95px;width:24px">15</div>
<div class="code" style="left:35.5px;top:196.95px">    <span class="k">private</span> Integer <span class="f">id</span>;</div>
<div class="ln" style="left:0px;top:210.82px;width:24px">16</div>
<div class="code" style="left:35.5px;top:210.82px"></div>
<div class="ln" style="left:0px;top:224.70px;width:24px">17</div>
<svg class="a" style="left:23.5px;top:225.39999999999998px" width="8" height="8" viewBox="0 0 8 8"><circle cx="4" cy="4" r="3.5" fill="#f4f7fb" stroke="#aab8c8"/><path d="M2 4h4" stroke="#7a8aa0"/></svg>
<div class="code" style="left:35.5px;top:224.70px">    <span class="an">@Getter</span> <span class="an">@Setter</span></div>
<div class="ln" style="left:0px;top:238.57px;width:24px">18</div>
<div class="code" style="left:35.5px;top:238.57px">    <span class="k">private</span> String <span class="f">name</span>;</div>
<div class="ln" style="left:0px;top:252.45px;width:24px">19</div>
<div class="code" style="left:35.5px;top:252.45px"></div>
<div class="ln" style="left:0px;top:266.32px;width:24px">20</div>
<svg class="a" style="left:23.5px;top:267.025px" width="8" height="8" viewBox="0 0 8 8"><circle cx="4" cy="4" r="3.5" fill="#f4f7fb" stroke="#aab8c8"/><path d="M2 4h4" stroke="#7a8aa0"/></svg>
<div class="code" style="left:35.5px;top:266.32px">    <span class="an">@Getter</span> <span class="an">@Setter</span></div>
<div class="ln" style="left:0px;top:280.20px;width:24px">21</div>
<div class="code" style="left:35.5px;top:280.20px">    <span class="k">private</span> String <span class="f">fullName</span>;</div>
<div class="ln" style="left:0px;top:294.07px;width:24px">22</div>
<div class="code" style="left:35.5px;top:294.07px"></div>
<div class="ln" style="left:0px;top:307.95px;width:24px">23</div>
<svg class="a" style="left:23.5px;top:308.65px" width="8" height="8" viewBox="0 0 8 8"><circle cx="4" cy="4" r="3.5" fill="#f4f7fb" stroke="#aab8c8"/><path d="M2 4h4" stroke="#7a8aa0"/></svg>
<div class="code" style="left:35.5px;top:307.95px">    <span class="an">@Getter</span> <span class="an">@Setter</span></div>
<div class="ln" style="left:0px;top:321.82px;width:24px">24</div>
<div class="code" style="left:35.5px;top:321.82px">    <span class="k">private</span> Date <span class="f">birthday</span>;</div>
<div class="ln" style="left:0px;top:335.70px;width:24px">25</div>
<div class="code" style="left:35.5px;top:335.70px"></div>
<div class="ln" style="left:0px;top:349.57px;width:24px">26</div>
<svg class="a" style="left:23.5px;top:350.275px" width="8" height="8" viewBox="0 0 8 8"><circle cx="4" cy="4" r="3.5" fill="#f4f7fb" stroke="#aab8c8"/><path d="M2 4h4" stroke="#7a8aa0"/></svg>
<div class="code" style="left:35.5px;top:349.57px">    <span class="an">@Getter</span> <span class="an">@Setter</span></div>
<div class="ln" style="left:0px;top:363.45px;width:24px">27</div>
<div class="code" style="left:35.5px;top:363.45px">    <span class="k">private</span> String <span class="f">race</span>;</div>
<div class="ln" style="left:0px;top:377.32px;width:24px">28</div>
<div class="code" style="left:35.5px;top:377.32px"></div>
<div class="ln" style="left:0px;top:391.20px;width:24px">29</div>
<svg class="a" style="left:23.5px;top:391.9px" width="8" height="8" viewBox="0 0 8 8"><circle cx="4" cy="4" r="3.5" fill="#f4f7fb" stroke="#aab8c8"/><path d="M2 4h4" stroke="#7a8aa0"/></svg>
<div class="code" style="left:35.5px;top:391.20px">    <span class="an">@Getter</span> <span class="an">@Setter</span></div>
<div class="ln" style="left:0px;top:405.07px;width:24px">30</div>
<div class="code" style="left:35.5px;top:405.07px">    <span class="k">private</span> Boolean <span class="f">lof</span>;</div>
<div class="ln" style="left:0px;top:418.95px;width:24px">31</div>
<div class="code" style="left:35.5px;top:418.95px"></div>
</div>
<div class="a" style="left:796px;top:97px;width:217px;height:466px;border:1px solid #a0a0a0;border-radius:4px 4px 0 0;background:#f0f0f0"></div>
<div class="a" style="left:878px;top:118px;width:134px;height:1px;background:#a0a0a0"></div>
<div class="a" style="left:797px;top:98px;width:81px;height:21px;background:linear-gradient(#fefefe,#f4f4f4 60%,#f0f0f0);border-radius:3px 3px 0 0"></div>
<div class="a" style="left:877px;top:98px;width:1px;height:21px;background:#a0a0a0"></div>
<svg class="a" style="left:801px;top:101px" width="13" height="15" viewBox="0 0 13 15"><rect x="0.5" y="0.5" width="4" height="4" fill="#bcd6f4" stroke="#2a6ac8"/><rect x="0.5" y="9.5" width="4" height="4" fill="#bcd6f4" stroke="#2a6ac8"/><path d="M6 2.5h6M6 11.5h6M7 7h1.5M10 7h2" stroke="#2a6ac8" stroke-width="1.2"/><path d="M2.5 5v4" stroke="#2a6ac8"/></svg>
<div class="t" style="left:818.7px;top:102.29px;font-size:11px;letter-spacing:0.323px;">Outline</div>
<svg class="a" style="left:861px;top:104px" width="10" height="9" viewBox="0 0 10 9"><path d="M1.5 1.5L8.5 7.5M8.5 1.5L1.5 7.5" stroke="#6a6a6a" stroke-width="3" stroke-linecap="square"/><path d="M1.5 1.5L8.5 7.5M8.5 1.5L1.5 7.5" stroke="#fff" stroke-width="1.3" stroke-linecap="square"/></svg>
<div class="a" style="left:980px;top:102px;width:10px;height:4px;border:1px solid #777;background:#fff;border-radius:1px"></div>
<div class="a" style="left:997px;top:102px;width:10px;height:9px;border:1px solid #777;border-top-width:2px;background:#fff"></div>
<div class="a" style="left:797px;top:142px;width:215px;height:1px;background:#c4c4c4"></div>
<svg class="a" style="left:848px;top:124px" width="13" height="13" viewBox="0 0 13 13"><circle cx="5" cy="4" r="3" fill="#c8c8c8"/><circle cx="9.5" cy="6.5" r="3" fill="#bdbdbd"/><circle cx="5" cy="9" r="3" fill="#aaaaaa"/></svg>
<svg class="a" style="left:869px;top:126px" width="13" height="12" viewBox="0 0 13 12"><rect x="0.5" y="0.5" width="9" height="8" fill="#dde8f6" stroke="#7a9ac8"/><rect x="3.5" y="3.5" width="9" height="8" fill="#eaf2fb" stroke="#4a7ab8"/><path d="M5.5 7.5h5" stroke="#2a5aa8" stroke-width="1.4"/></svg>
<div class="a" style="left:886px;top:122px;width:21px;height:19px;border:1px solid #6f6f6f;border-radius:3px;background:linear-gradient(#e4e4e4,#d4d4d4)"></div>
<svg class="a" style="left:888px;top:123px" width="17" height="17" viewBox="0 0 17 17"><path d="M3 3v11M1 11.5l2 3 2-3" stroke="#555" stroke-width="1.1" fill="none"/><text x="6" y="8.5" font-family="Liberation Sans" font-weight="bold" font-size="10" fill="#2a8a7a">a</text><text x="9" y="16.5" font-family="Liberation Sans" font-weight="bold" font-size="10" fill="#9a3aa8">z</text></svg>
<svg class="a" style="left:911px;top:124px" width="14" height="14" viewBox="0 0 14 14"><circle cx="7" cy="7" r="5" fill="#5aa8e8" stroke="#2a6ab8"/><circle cx="7" cy="7" r="2.2" fill="#dff0fc"/><path d="M1 1l12 12" stroke="#1a3a9a" stroke-width="1.5"/></svg>
<svg class="a" style="left:933px;top:122px" width="14" height="16" viewBox="0 0 14 16"><circle cx="6" cy="9" r="4" fill="#8a8a8a"/><path d="M1 3l12 12" stroke="#1a3a9a" stroke-width="1.5"/><text x="9" y="6" font-family="Liberation Sans" font-weight="bold" font-size="6.5" fill="#2a5aa8">S</text></svg>
<svg class="a" style="left:956px;top:127px" width="9" height="9" viewBox="0 0 9 9"><circle cx="4.5" cy="4.5" r="3.8" fill="#48a854" stroke="#2a7a34" stroke-width=".8"/></svg>
<svg class="a" style="left:975px;top:122px" width="14" height="16" viewBox="0 0 14 16"><circle cx="6" cy="9" r="4" fill="#8a8a8a"/><path d="M1 3l12 12" stroke="#1a3a9a" stroke-width="1.5"/><text x="9" y="6" font-family="Liberation Sans" font-weight="bold" font-size="6.5" fill="#2a5aa8">L</text></svg>
<svg class="a" style="left:997px;top:125px" width="11" height="6" viewBox="0 0 11 6"><path d="M0.5 0.5h10l-5 5z" fill="#fff" stroke="#777"/></svg>
<div class="a" style="left:797px;top:143px;width:215px;height:402px;background:#fff"></div>
<div class="a" style="left:995px;top:143px;width:17px;height:402px;background:linear-gradient(90deg,#ececec,#f4f4f4 50%,#ececec)"></div>
<svg class="a" style="left:999px;top:148px" width="8" height="5" viewBox="0 0 8 5"><path d="M0.5 4.5l3.5-4 3.5 4z" fill="#333"/></svg>
<svg class="a" style="left:999px;top:535px" width="8" height="5" viewBox="0 0 8 5"><path d="M0.5 0.5l3.5 4 3.5-4z" fill="#333"/></svg>
<div class="a" style="left:995px;top:225px;width:15px;height:217px;border:1px solid #979797;border-radius:2px;background:linear-gradient(90deg,#f6f6f6,#e6e6e6 50%,#d3d3d3 51%,#dcdcdc)"></div>
<div class="a" style="left:999px;top:329px;width:7px;height:8px;background:repeating-linear-gradient(#555 0 1px,#e8e8e8 1px 2px,transparent 2px 3px)"></div>
<div class="a" style="left:797px;top:545px;width:198px;height:16px;background:#f0f0f0"></div>
<svg class="a" style="left:802px;top:548px" width="5" height="8" viewBox="0 0 5 8"><path d="M4.5 0.5v7l-4-3.5z" fill="#555"/></svg>
<svg class="a" style="left:985px;top:548px" width="5" height="8" viewBox="0 0 5 8"><path d="M0.5 0.5v7l4-3.5z" fill="#555"/></svg>
<div class="a" style="left:816px;top:545px;width:64px;height:14px;border:1px solid #979797;border-radius:2px;background:linear-gradient(#f6f6f6,#e6e6e6 50%,#d3d3d3 51%,#dcdcdc)"></div>
<div class="a" style="left:844px;top:549px;width:8px;height:7px;background:repeating-linear-gradient(90deg,#555 0 1px,#e8e8e8 1px 2px,transparent 2px 3px)"></div>
<div class="a" style="left:797px;top:143px;width:198px;height:402px;overflow:hidden">
<div class="a" style="left:49px;top:135.5px;width:93px;height:15px;border:1px solid #dadada;border-radius:3px;background:linear-gradient(#fafafa,#ebebeb)"></div>
<svg class="a" style="left:29px;top:2.5999999999999943px" width="12" height="12" viewBox="0 0 12 12"><circle cx="6" cy="6" r="5.4" fill="#2f8f3e" stroke="#1b5e26" stroke-width=".8"/><circle cx="6" cy="6" r="4.2" fill="#3fa44d"/><path d="M8.3 3.8A3 3 0 1 0 8.3 8.2" fill="none" stroke="#fff" stroke-width="1.5"/></svg>
<div class="t" style="left:53.799999999999955px;top:2.79px;font-size:11px;letter-spacing:0.209px;">DogLombok</div>
<svg class="a" style="left:56.5px;top:23.24000000000001px" width="5" height="5" viewBox="0 0 5 5"><rect x="0.6" y="0.6" width="3.8" height="3.8" fill="#fff" stroke="#d8404a" stroke-width="1.2"/></svg>
<div class="t" style="left:76.29999999999995px;top:19.43px;font-size:11px;letter-spacing:0.010px;">birthday <span class="ty">: Date</span></div>
<svg class="a" style="left:56.5px;top:39.879999999999995px" width="5" height="5" viewBox="0 0 5 5"><rect x="0.6" y="0.6" width="3.8" height="3.8" fill="#fff" stroke="#d8404a" stroke-width="1.2"/></svg>
<div class="t" style="left:76.29999999999995px;top:36.07px;font-size:11px;letter-spacing:0.026px;">color <span class="ty">: String</span></div>
<svg class="a" style="left:56.5px;top:56.51999999999998px" width="5" height="5" viewBox="0 0 5 5"><rect x="0.6" y="0.6" width="3.8" height="3.8" fill="#fff" stroke="#d8404a" stroke-width="1.2"/></svg>
<div class="t" style="left:76.29999999999995px;top:52.71px;font-size:11px;letter-spacing:0.029px;">father <span class="ty">: Dog</span></div>
<svg class="a" style="left:56.5px;top:73.16px" width="5" height="5" viewBox="0 0 5 5"><rect x="0.6" y="0.6" width="3.8" height="3.8" fill="#fff" stroke="#d8404a" stroke-width="1.2"/></svg>
<div class="t" style="left:76.29999999999995px;top:69.35px;font-size:11px;letter-spacing:0.073px;">fullName <span class="ty">: String</span></div>
<svg class="a" style="left:56.5px;top:89.80000000000001px" width="5" height="5" viewBox="0 0 5 5"><rect x="0.6" y="0.6" width="3.8" height="3.8" fill="#fff" stroke="#d8404a" stroke-width="1.2"/></svg>
<div class="t" style="left:76.29999999999995px;top:85.99px;font-size:11px;letter-spacing:0.038px;">id <span class="ty">: Integer</span></div>
<svg class="a" style="left:56.5px;top:106.44px" width="5" height="5" viewBox="0 0 5 5"><rect x="0.6" y="0.6" width="3.8" height="3.8" fill="#fff" stroke="#d8404a" stroke-width="1.2"/></svg>
<div class="t" style="left:76.29999999999995px;top:102.63px;font-size:11px;letter-spacing:-0.006px;">lof <span class="ty">: Boolean</span></div>
<svg class="a" style="left:56.5px;top:123.07999999999998px" width="5" height="5" viewBox="0 0 5 5"><rect x="0.6" y="0.6" width="3.8" height="3.8" fill="#fff" stroke="#d8404a" stroke-width="1.2"/></svg>
<div class="t" style="left:76.29999999999995px;top:119.27px;font-size:11px;letter-spacing:0.110px;">mother <span class="ty">: Dog</span></div>
<svg class="a" style="left:56.5px;top:139.72000000000003px" width="5" height="5" viewBox="0 0 5 5"><rect x="0.6" y="0.6" width="3.8" height="3.8" fill="#fff" stroke="#d8404a" stroke-width="1.2"/></svg>
<div class="t" style="left:76.29999999999995px;top:135.91px;font-size:11px;letter-spacing:-0.052px;">name : String</div>
<svg class="a" style="left:56.5px;top:156.36px" width="5" height="5" viewBox="0 0 5 5"><rect x="0.6" y="0.6" width="3.8" height="3.8" fill="#fff" stroke="#d8404a" stroke-width="1.2"/></svg>
<div class="t" style="left:76.29999999999995px;top:152.55px;font-size:11px;letter-spacing:-0.127px;">race <span class="ty">: String</span></div>
<svg class="a" style="left:56.5px;top:173.0px" width="5" height="5" viewBox="0 0 5 5"><rect x="0.6" y="0.6" width="3.8" height="3.8" fill="#fff" stroke="#d8404a" stroke-width="1.2"/></svg>
<div class="t" style="left:76.29999999999995px;top:169.19px;font-size:11px;letter-spacing:0.118px;">weight <span class="ty">: Double</span></div>
<svg class="a" style="left:54px;top:188.33999999999997px" width="9" height="9" viewBox="0 0 9 9"><defs><radialGradient id="gd" cx=".4" cy=".35" r=".7"><stop offset="0" stop-color="#9ad49a"/><stop offset="1" stop-color="#3f9a4a"/></radialGradient></defs><circle cx="4.5" cy="4.5" r="3.6" fill="url(#gd)" stroke="#3a7a44" stroke-width=".7"/></svg>
<div class="a" style="left:65.20000000000005px;top:182.24px;font-size:9.5px;font-weight:bold;color:#1e8a2e;line-height:9px">c</div>
<div class="t" style="left:76.29999999999995px;top:185.83px;font-size:11px;letter-spacing:0.176px;">DogLombok()</div>
<svg class="a" style="left:54px;top:204.97999999999996px" width="9" height="9" viewBox="0 0 9 9"><defs><radialGradient id="gd" cx=".4" cy=".35" r=".7"><stop offset="0" stop-color="#9ad49a"/><stop offset="1" stop-color="#3f9a4a"/></radialGradient></defs><circle cx="4.5" cy="4.5" r="3.6" fill="url(#gd)" stroke="#3a7a44" stroke-width=".7"/></svg>
<div class="a" style="left:65.20000000000005px;top:198.88px;font-size:9.5px;font-weight:bold;color:#1e8a2e;line-height:9px">c</div>
<div class="t" style="left:76.29999999999995px;top:202.47px;font-size:11px;">DogLombok(Integer, String, String, Date, String, Boolean)</div>
<svg class="a" style="left:54px;top:221.61999999999995px" width="9" height="9" viewBox="0 0 9 9"><defs><radialGradient id="gd" cx=".4" cy=".35" r=".7"><stop offset="0" stop-color="#9ad49a"/><stop offset="1" stop-color="#3f9a4a"/></radialGradient></defs><circle cx="4.5" cy="4.5" r="3.6" fill="url(#gd)" stroke="#3a7a44" stroke-width=".7"/></svg>
<div class="t" style="left:76.29999999999995px;top:219.11px;font-size:11px;letter-spacing:-0.042px;">getBirthday() <span class="ty">: Date</span></div>
<svg class="a" style="left:54px;top:238.26px" width="9" height="9" viewBox="0 0 9 9"><defs><radialGradient id="gd" cx=".4" cy=".35" r=".7"><stop offset="0" stop-color="#9ad49a"/><stop offset="1" stop-color="#3f9a4a"/></radialGradient></defs><circle cx="4.5" cy="4.5" r="3.6" fill="url(#gd)" stroke="#3a7a44" stroke-width=".7"/></svg>
<div class="t" style="left:76.29999999999995px;top:235.75px;font-size:11px;letter-spacing:-0.002px;">getColor() <span class="ty">: String</span></div>
<svg class="a" style="left:54px;top:254.90000000000003px" width="9" height="9" viewBox="0 0 9 9"><defs><radialGradient id="gd" cx=".4" cy=".35" r=".7"><stop offset="0" stop-color="#9ad49a"/><stop offset="1" stop-color="#3f9a4a"/></radialGradient></defs><circle cx="4.5" cy="4.5" r="3.6" fill="url(#gd)" stroke="#3a7a44" stroke-width=".7"/></svg>
<div class="t" style="left:76.29999999999995px;top:252.39px;font-size:11px;letter-spacing:-0.073px;">getFather() <span class="ty">: Dog</span></div>
<svg class="a" style="left:54px;top:271.54px" width="9" height="9" viewBox="0 0 9 9"><defs><radialGradient id="gd" cx=".4" cy=".35" r=".7"><stop offset="0" stop-color="#9ad49a"/><stop offset="1" stop-color="#3f9a4a"/></radialGradient></defs><circle cx="4.5" cy="4.5" r="3.6" fill="url(#gd)" stroke="#3a7a44" stroke-width=".7"/></svg>
<div class="t" style="left:76.29999999999995px;top:269.03px;font-size:11px;letter-spacing:-0.010px;">getFullName() <span class="ty">: String</span></div>
<svg class="a" style="left:54px;top:288.18px" width="9" height="9" viewBox="0 0 9 9"><defs><radialGradient id="gd" cx=".4" cy=".35" r=".7"><stop offset="0" stop-color="#9ad49a"/><stop offset="1" stop-color="#3f9a4a"/></radialGradient></defs><circle cx="4.5" cy="4.5" r="3.6" fill="url(#gd)" stroke="#3a7a44" stroke-width=".7"/></svg>
<div class="t" style="left:76.29999999999995px;top:285.67px;font-size:11px;letter-spacing:-0.020px;">getId() <span class="ty">: Integer</span></div>
<svg class="a" style="left:54px;top:304.82px" width="9" height="9" viewBox="0 0 9 9"><defs><radialGradient id="gd" cx=".4" cy=".35" r=".7"><stop offset="0" stop-color="#9ad49a"/><stop offset="1" stop-color="#3f9a4a"/></radialGradient></defs><circle cx="4.5" cy="4.5" r="3.6" fill="url(#gd)" stroke="#3a7a44" stroke-width=".7"/></svg>
<div class="t" style="left:76.29999999999995px;top:302.31px;font-size:11px;letter-spacing:-0.056px;">getLof() <span class="ty">: Boolean</span></div>
<svg class="a" style="left:54px;top:321.46px" width="9" height="9" viewBox="0 0 9 9"><defs><radialGradient id="gd" cx=".4" cy=".35" r=".7"><stop offset="0" stop-color="#9ad49a"/><stop offset="1" stop-color="#3f9a4a"/></radialGradient></defs><circle cx="4.5" cy="4.5" r="3.6" fill="url(#gd)" stroke="#3a7a44" stroke-width=".7"/></svg>
<div class="t" style="left:76.29999999999995px;top:318.95px;font-size:11px;letter-spacing:0.080px;">getMother() <span class="ty">: Dog</span></div>
<svg class="a" style="left:54px;top:338.09999999999997px" width="9" height="9" viewBox="0 0 9 9"><defs><radialGradient id="gd" cx=".4" cy=".35" r=".7"><stop offset="0" stop-color="#9ad49a"/><stop offset="1" stop-color="#3f9a4a"/></radialGradient></defs><circle cx="4.5" cy="4.5" r="3.6" fill="url(#gd)" stroke="#3a7a44" stroke-width=".7"/></svg>
<div class="t" style="left:76.29999999999995px;top:335.59px;font-size:11px;letter-spacing:-0.029px;">getName() <span class="ty">: String</span></div>
<svg class="a" style="left:54px;top:354.73999999999995px" width="9" height="9" viewBox="0 0 9 9"><defs><radialGradient id="gd" cx=".4" cy=".35" r=".7"><stop offset="0" stop-color="#9ad49a"/><stop offset="1" stop-color="#3f9a4a"/></radialGradient></defs><circle cx="4.5" cy="4.5" r="3.6" fill="url(#gd)" stroke="#3a7a44" stroke-width=".7"/></svg>
<div class="t" style="left:76.29999999999995px;top:352.23px;font-size:11px;letter-spacing:-0.172px;">getRace() <span class="ty">: String</span></div>
<svg class="a" style="left:54px;top:371.3800000000001px" width="9" height="9" viewBox="0 0 9 9"><defs><radialGradient id="gd" cx=".4" cy=".35" r=".7"><stop offset="0" stop-color="#9ad49a"/><stop offset="1" stop-color="#3f9a4a"/></radialGradient></defs><circle cx="4.5" cy="4.5" r="3.6" fill="url(#gd)" stroke="#3a7a44" stroke-width=".7"/></svg>
<div class="t" style="left:76.29999999999995px;top:368.87px;font-size:11px;letter-spacing:0.063px;">getWeight() <span class="ty">: Double</span></div>
<svg class="a" style="left:54px;top:388.0200000000001px" width="9" height="9" viewBox="0 0 9 9"><defs><radialGradient id="gd" cx=".4" cy=".35" r=".7"><stop offset="0" stop-color="#9ad49a"/><stop offset="1" stop-color="#3f9a4a"/></radialGradient></defs><circle cx="4.5" cy="4.5" r="3.6" fill="url(#gd)" stroke="#3a7a44" stroke-width=".7"/></svg>
<div class="t" style="left:76.29999999999995px;top:385.51px;font-size:11px;letter-spacing:-0.050px;">setBirthday(Date) <span class="ty">: void</span></div>
</div>
<div class="grip" style="left:13px;top:565px;height:21px"></div>
<svg class="a" style="left:23px;top:567px" width="15" height="15" viewBox="0 0 15 15"><rect x="0.5" y="2.5" width="6" height="12" fill="#eef4fb" stroke="#8a8a6a"/><rect x="0.5" y="2.5" width="6" height="2.5" fill="#3a7ac8"/><path d="M10.5 0 l1.2 2.3 2.3 1.2 -2.3 1.2 -1.2 2.3 -1.2 -2.3 -2.3 -1.2 2.3 -1.2z" fill="#f6d35b" stroke="#b08a20" stroke-width=".6"/></svg>
<div class="a" style="left:469px;top:565px;width:1px;height:23px;background:#a8a8a8"></div>
<div class="a" style="left:470px;top:565px;width:1px;height:23px;background:#fff"></div>
<div class="a" style="left:566px;top:565px;width:1px;height:23px;background:#a8a8a8"></div>
<div class="a" style="left:567px;top:565px;width:1px;height:23px;background:#fff"></div>
<div class="a" style="left:656px;top:565px;width:1px;height:23px;background:#a8a8a8"></div>
<div class="a" style="left:657px;top:565px;width:1px;height:23px;background:#fff"></div>
<div class="t" style="left:477.2px;top:570.69px;font-size:11px;letter-spacing:0.121px;">Writable</div>
<div class="t" style="left:573.6px;top:570.69px;font-size:11px;letter-spacing:-0.091px;">Smart Insert</div>
<div class="t" style="left:663.3px;top:570.69px;font-size:11px;letter-spacing:-0.273px;">18 : 25</div>
<div class="grip" style="left:751px;top:565px;height:22px"></div>
</body></html>
